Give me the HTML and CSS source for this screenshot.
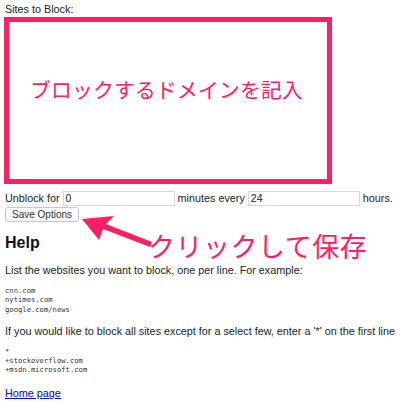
FILE: index.html
```html
<!DOCTYPE html>
<html lang="en">
<head>
<meta charset="utf-8">
<title>Options</title>
<link rel="stylesheet" href="styles.css">
</head>
<body>
<div class="label">Sites to Block:</div>
<div class="sites">
  <span class="note-in">ブロックするドメインを記入</span>
</div>
<div class="row">
  <span>Unblock for</span>
  <span class="input">0</span>
  <span>minutes every</span>
  <span class="input">24</span>
  <span>hours.</span>
</div>
<div class="btn">Save Options</div>
<h1 class="help">Help</h1>
<p class="text">List the websites you want to block, one per line. For example:</p>
<pre class="code">cnn.com
nytimes.com
google.com/news</pre>
<p class="text nowrap">If you would like to block all sites except for a select few, enter a '*' on the first line</p>
<pre class="code">*
+stockoverflow.com
+msdn.microsoft.com</pre>
<a class="home" href="#">Home page</a>

<svg class="arrow" width="90" height="40" viewBox="0 0 90 40">
  <polygon points="0,3 32,0 24,8 70,26 68,31 21,13 17,24" fill="#ff2063"/>
</svg>
<div class="note-out">クリックして保存</div>
</body>
</html>
```

FILE: styles.css
```css
html, body {
  margin: 0;
  padding: 0;
  background: #fff;
}
body {
  padding: 3px 5px;
  font-family: "Liberation Sans", Arial, sans-serif;
  font-size: 10.8px;
  color: #222;
  position: relative;
  width: 390px;
  height: 403px;
  overflow: hidden;
}
.label {
  line-height: 13px;
}
.sites {
  margin: 1px 0 0 -1px;
  height: 157px;
  border: 5px solid #ff2063;
  display: flex;
  align-items: center;
  padding-left: 21px;
  box-sizing: content-box;
  width: 297px;
}
.note-in {
  font-family: "Noto Sans CJK JP", sans-serif;
  font-size: 20.8px;
  color: #ff2063;
  line-height: 1;
  margin-bottom: 22px;
  letter-spacing: 0.2px;
  white-space: nowrap;
}
.row {
  display: flex;
  align-items: center;
  gap: 3px;
  margin-top: 6px;
  height: 16px;
  white-space: nowrap;
}
.row > span {
  flex-shrink: 0;
}
.input {
  width: 106px;
  height: 13px;
  border: 1px solid #d6d6d6;
  padding: 0 2px;
  line-height: 13px;
  font-size: 10.5px;
}
.btn {
  display: inline-block;
  margin-top: 1px;
  height: 13px;
  line-height: 13px;
  padding: 0 6px;
  border: 1px solid #c8c8c8;
  border-radius: 3px;
  font-size: 10px;
  color: #333;
  background: linear-gradient(#fff, #f4f4f4);
}
.help {
  font-size: 16px;
  font-weight: bold;
  margin: 11px 0 0;
  line-height: 20px;
  color: #111;
}
.text {
  margin: 10px 0 0;
  line-height: 14px;
}
.nowrap {
  white-space: nowrap;
}
.code {
  margin: 9px 0 0;
  font-family: "DejaVu Sans Mono", monospace;
  font-size: 7.2px;
  line-height: 9.3px;
  color: #333;
}
.home {
  display: inline-block;
  margin-top: 11px;
  color: #0000ee;
  text-decoration: underline;
  line-height: 14px;
}
.arrow {
  position: absolute;
  left: 82px;
  top: 216px;
}
.note-out {
  position: absolute;
  left: 148px;
  top: 228px;
  font-family: "Noto Sans CJK JP", sans-serif;
  font-size: 27px;
  line-height: 36px;
  color: #ff2063;
  letter-spacing: 0.5px;
}
```
